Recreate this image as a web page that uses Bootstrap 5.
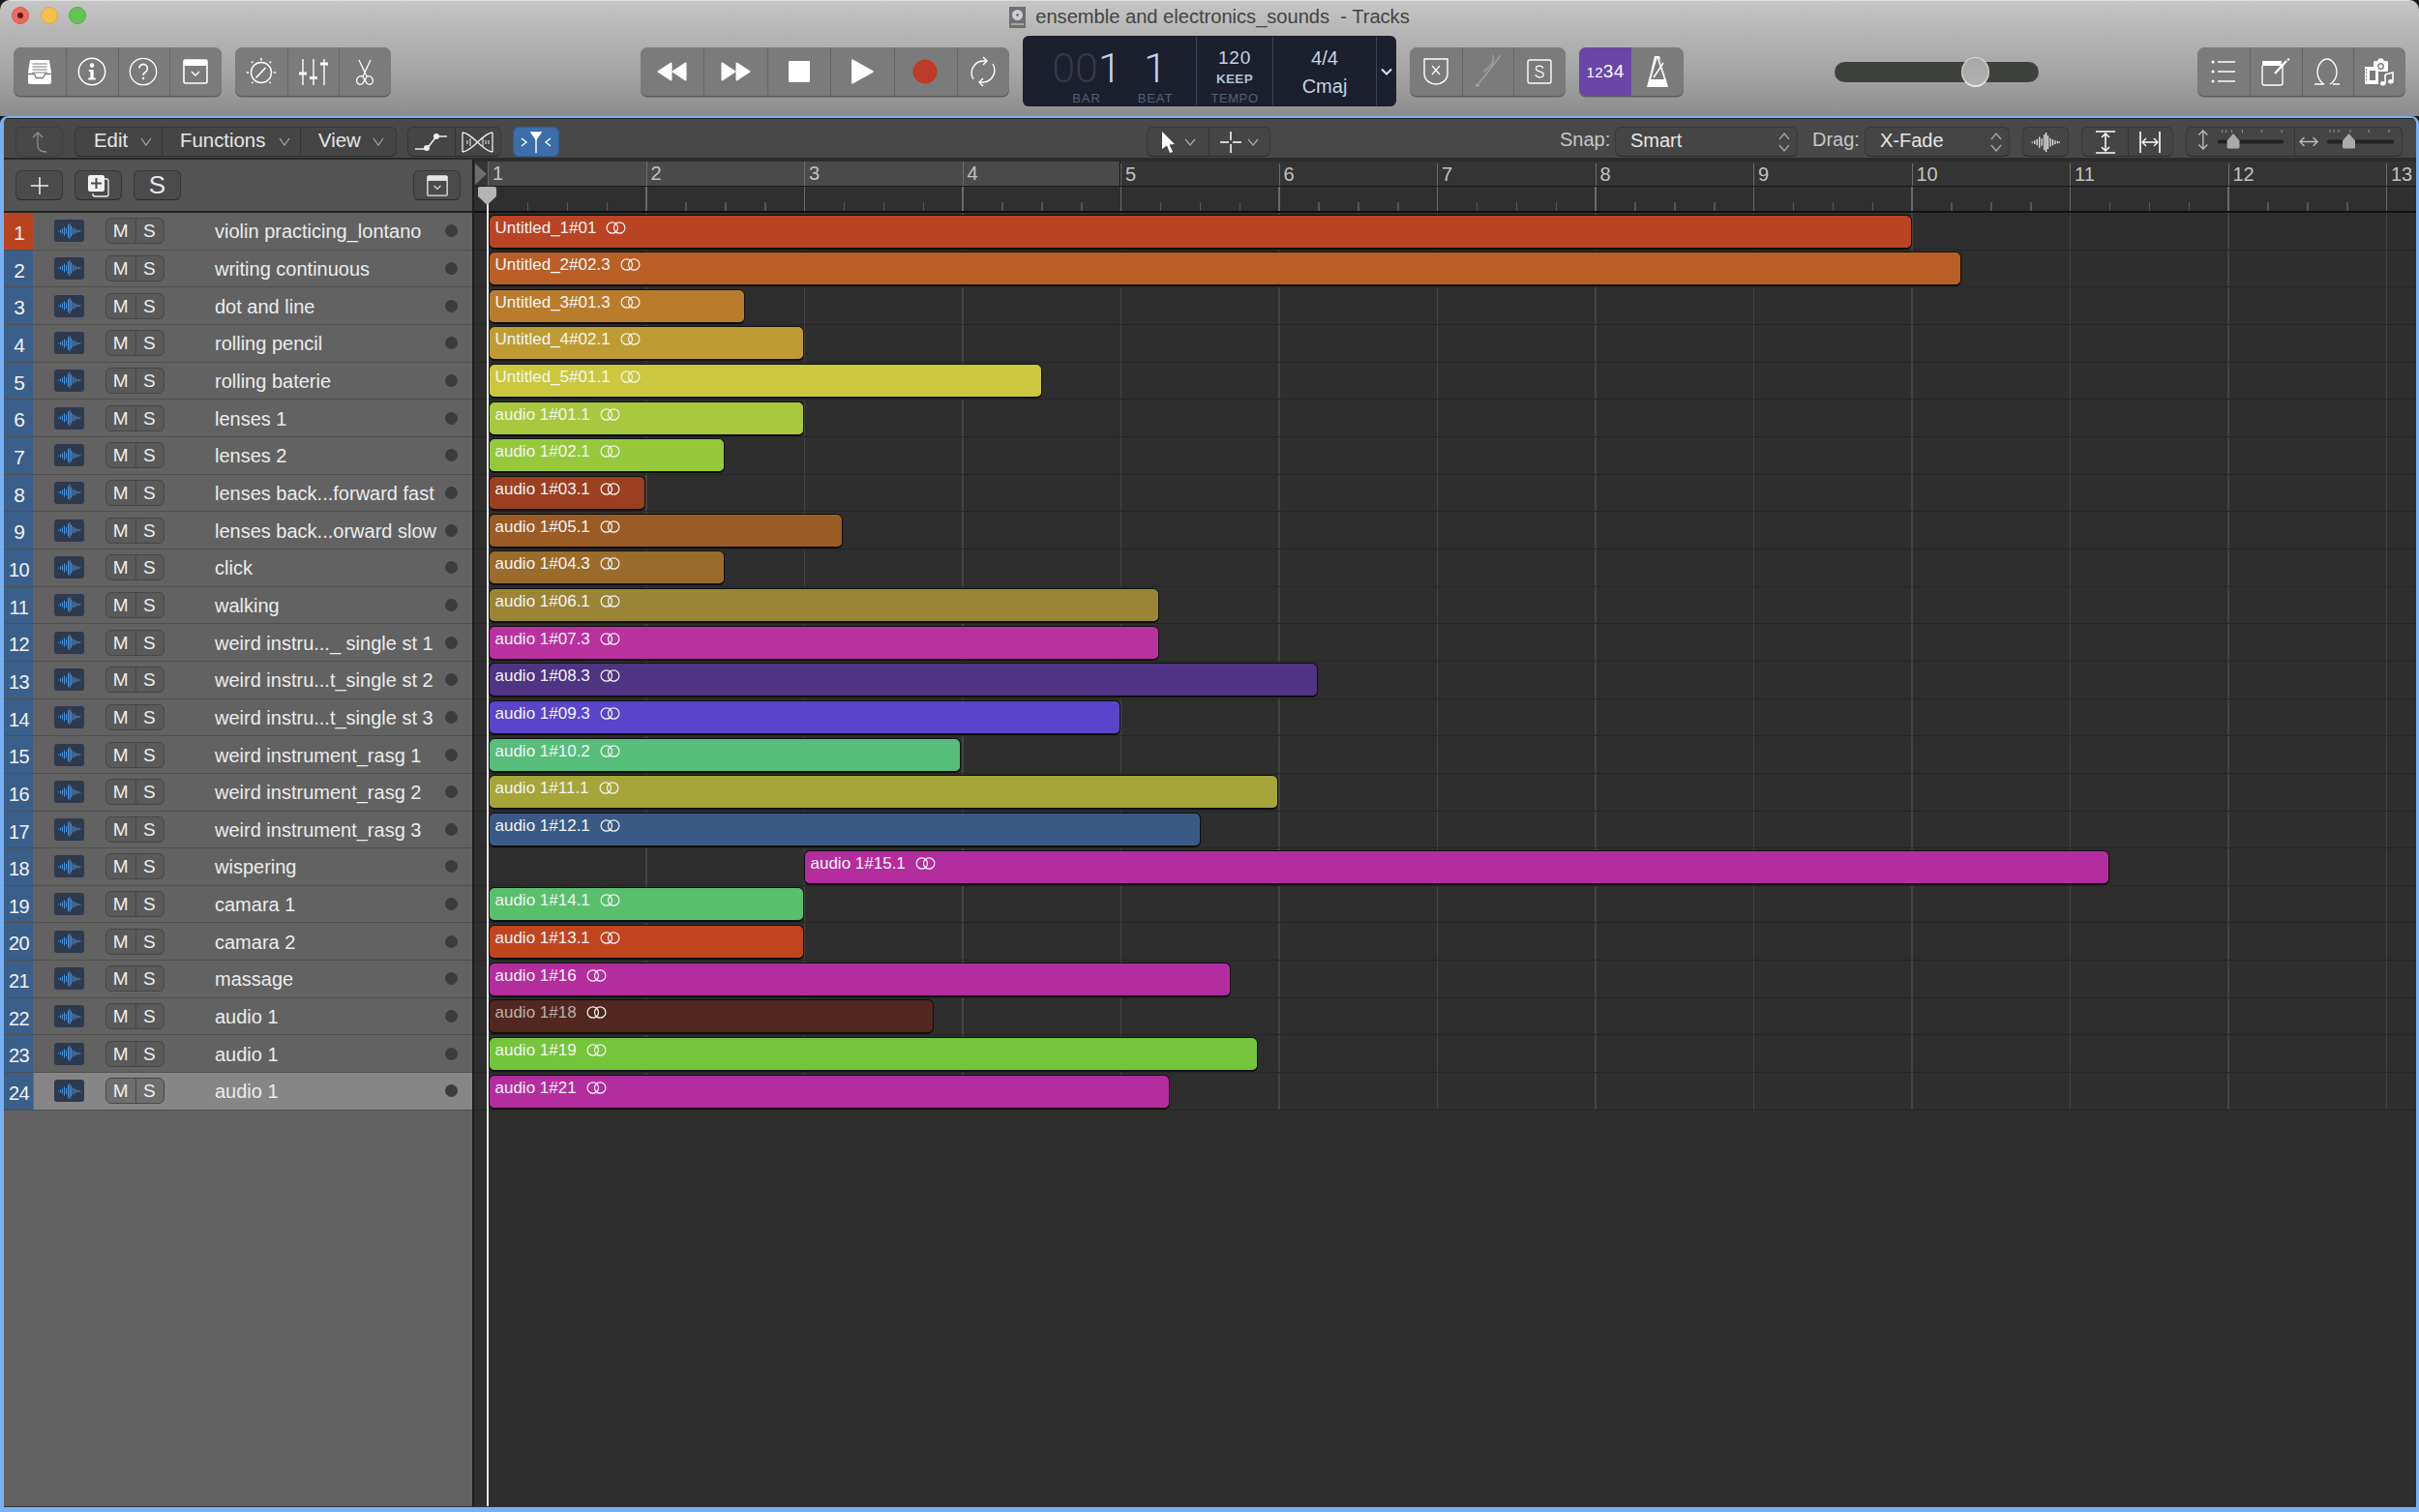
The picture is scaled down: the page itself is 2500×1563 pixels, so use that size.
<!DOCTYPE html>
<html lang="en">
<head>
<meta charset="utf-8">
<title>ensemble and electronics_sounds - Tracks</title>
<link href="https://cdn.jsdelivr.net/npm/bootstrap@5.3.0/dist/css/bootstrap.min.css" rel="stylesheet">
<style>
html,body{margin:0;height:1563px;width:2500px;overflow:hidden;background:#1b1b1b}
body{font-family:"Liberation Sans",Arial,sans-serif;font-size:20px;color:#e8e8e8}
svg{display:block}
.daw{width:2500px;height:1563px;border-radius:10px 10px 0 0;overflow:hidden}
.topbar{height:120px;background:linear-gradient(#c6c6c6 0,#b6b6b6 25%,#a6a6a6 60%,#8c8c8c 100%);border-top:1px solid #dedede}
.titlerow{height:36px;color:#444;white-space:pre;padding-bottom:3px;font-size:20.1px}
.lamps{left:12px;top:6px}
.lamp{width:18px;height:18px;border-radius:50%;margin-right:11.5px}
.lamp.r{background:#ec6a5e;border:1px solid #d8574c;position:relative}
.lamp.r::after{content:"";position:absolute;left:5px;top:5px;width:6px;height:6px;border-radius:50%;background:#5c1a14}
.lamp.y{background:#f4bf4f;border:1px solid #deaa3f}
.lamp.g{background:#61c554;border:1px solid #50ad45}
.docglyph{width:17px;height:22px;margin-right:10px;margin-top:0}
.toolrow{height:73px;padding-left:14px}
.tgrp{height:50px;margin-top:12px;background:#7b7b7b;border-radius:7px;box-shadow:0 1.5px 0 #5f5f5f}
.tgrp>.btn{background:transparent;border:0;border-radius:0;padding:0;color:#fff;display:flex;align-items:center;justify-content:center;border-right:1px solid #666;flex:1 1 0;margin:0}
.tgrp>.btn:last-child{border-right:0}
.tgrp>.btn.narrow{flex:0 0 54px}
.w215{width:215px}.w161{width:161px}.w381{width:381px}.w108{width:108px}
.m14{margin-left:14px}.m258{margin-left:258px}.m156{margin-left:156px}.m164{margin-left:164px}
.tgrp>.btn.counter{background:#6b46a8;flex:0 0 54px;border-radius:7px 0 0 7px;border:0;font-size:19px;letter-spacing:.3px}
.counter small{font-size:15px}
.lcd{width:386px;height:73px;margin-left:14px;background:#1b1f2e;border-radius:6px;color:#c6d3e4;font-family:"Liberation Sans",sans-serif}
.lcell{border-right:1.5px solid #3b4559;height:71px;margin-top:1px}
.lpos{width:180px;padding-left:29px}
.ltempo{width:79px}
.lsig{width:107px}
.lnum{font-family:Roboto,"Liberation Sans",sans-serif;font-weight:300;font-size:43px;line-height:43px;color:#c6d3e4;margin-top:10.5px;white-space:nowrap}
.lnum i{font-style:normal;color:#33394a}
.llab{font-size:13px;line-height:13px;color:#55607a;letter-spacing:.9px;margin-top:3.5px}
.lbar{width:74px}.lbeat{width:68px}
.lt1{font-size:19px;line-height:19px;margin-top:11.5px;letter-spacing:.7px}
.lt2{font-size:13.5px;line-height:14px;margin-top:6.5px;font-weight:700;color:#b4c0d2;letter-spacing:.3px}
.lt3{font-size:13px;line-height:13px;margin-top:6px;color:#55607a;letter-spacing:.6px}
.ls1{font-size:20px;line-height:20px;margin-top:11.5px}
.ls2{font-size:20px;line-height:20px;margin-top:9px}
.volwrap{width:211px;height:50px;margin-top:12px}
.voltrack{width:211px;height:21px;border-radius:11px;background:#3f413d}
.volthumb{left:131px;top:-5px;width:29px;height:31px;border-radius:50%;background:linear-gradient(#a8a8a8,#b0b0b0);border:1px solid #dcdcdc;border-bottom:2px solid #e6e6e6}
.frame{height:1442px;border:solid #7ab0f1;border-width:2px 3px 5px 4px;border-radius:8px 8px 0 0;background:#333;overflow:hidden}
.bar2{height:43px;background:#484848;border-top:1px solid #222;border-bottom:2px solid #2a2a2a;position:relative}
.dbtn{height:31px;background:#454545;border:1px solid #383838;border-bottom-color:#2c2c2c;border-radius:6px;color:#e6e6e6;font-size:20px;padding:0;display:flex;align-items:center;justify-content:center}
.dbtn:disabled,.dbtn.off{opacity:1;background:#484848;color:#8c8c8c;border-color:#3e3e3e}
.dgrp{height:31px;background:#454545;border:1px solid #383838;border-bottom-color:#2c2c2c;border-radius:6px}
.dgrp>.btn{background:transparent;border:0;border-right:1px solid #333;border-radius:0;color:#e6e6e6;padding:0;font-size:20.4px;margin:0;display:flex;align-items:center;justify-content:center;flex:none;height:29px}
.dgrp>.btn:last-child{border-right:0}
.dgrp>.btn.mnu{justify-content:space-between;padding:0 10px 0 19px}
.mnu span{padding-bottom:3px}
.sel span{padding-bottom:3px}
.ml12{margin-left:12px}
.pos-a{position:absolute;top:8px}
.ttxt{color:#c6c6c6}
.sel{justify-content:space-between!important;padding:0 7px 0 15px!important}
.snap{width:189px}.drag{width:150px}
.lower{height:1392px}
.leftp{width:484px;background:#626262;border-right:2px solid #1e1e1e;box-sizing:content-box}
.lhead{height:55px;background:#535353;border-bottom:2px solid #222;padding:11px 12px 0 12px}
.lhead .dbtn{width:49px;background:#4b4b4b}
.trow{height:38.67px;background:#626262;border-bottom:1.5px solid #505050;box-sizing:border-box}
.trow.sel24{background:#868686}
.tnum{width:30px;height:100%;background:#3a5f8a;color:#f2f2f2;font-size:21px;flex:none;text-align:center;padding:8px 0 0 2px;line-height:26px;box-shadow:1px 0 0 #506c8a}
.tnum.hot{background:#b9431f}
.tnum.nn{font-size:20px;letter-spacing:-.5px;padding-left:1px}
.ticon{margin-left:22px;width:31px;height:23px;background:#2d3a4e;border-radius:3px;flex:none;color:#4c92dc;display:flex;align-items:center;justify-content:center}
.msg{margin-left:22px;width:61px;height:27px;background:#5a5a5a;border:1px solid #474747;border-radius:6px;flex:none}
.msg>.btn{flex:1 1 0;padding:0;background:transparent;border:0;border-right:1.5px solid #474747;border-radius:0;color:#eee;font-size:19px;line-height:25px;margin:0}
.msg>.btn:last-child{border-right:0}
.trow.sel24 .msg{background:#6e6e6e}
.tname{margin-left:52px;color:#ececec;font-size:20px;white-space:nowrap;line-height:36px;padding-top:1px}
.tdot{width:13px;height:13px;background:#3c3c3c;border-radius:50%;margin-right:15px;flex:none}
.timeline{width:2006px;position:relative;background:#2e2e2e}
.rule1{height:25px;background:#343434;padding-left:14px;border-top:2px solid #2c2c2c;border-bottom:1px solid #1b1b1b;box-sizing:content-box}
.bcell{width:163.5px;flex:none;border-left:1.5px solid #6d6d6d;padding-left:4px;color:#c2c2c2;font-size:20px;line-height:22px;height:23px;margin-top:2px;overflow:visible}
.bfill{background:#4a4a4a;height:25px;margin-top:0;padding-top:2px;line-height:20px;border-left-color:#6d6d6d}
.bfirst{border-left:1px dotted #888;}
.cycend{border-right:1px solid #111}
.rule2{height:27px;border-bottom:2px solid #111;background-color:#2f2f2f;background-image:repeating-linear-gradient(90deg,#6a6a6a 0 1.5px,transparent 1.5px 163.5px),repeating-linear-gradient(90deg,#555 0 1.5px,transparent 1.5px 40.875px);background-size:100% 100%,100% 9px;background-position:14px 0,14px bottom;background-repeat:no-repeat;box-sizing:border-box}
.lanes{height:928.1px;padding-left:15px;background-image:repeating-linear-gradient(90deg,#444 0 1.5px,transparent 1.5px 163.5px);background-position:14px 0;background-repeat:no-repeat}
.lane{height:38.67px;border-bottom:1px solid #262626;padding-top:1.5px;box-sizing:border-box;margin-left:-15px;padding-left:15px;display:flex}
.rgn{height:36px;border:1px solid #0f0f0f;border-bottom-width:2px;border-radius:6px;color:#f4f4f4;font-size:17px;line-height:17px;padding:4px 0 0 5.5px;display:flex;align-items:flex-start;white-space:nowrap;flex:none}
.rgn svg{margin-left:10px;margin-top:2px}
.rgn.dim{color:#bdb0a8}
.c1{background:#b94323}.c2{background:#b95f26}.c3{background:#b97c2c}.c4{background:#bf9c33}.c5{background:#cbc83f}.c6{background:#a9c73f}.c7{background:#96c83c}.c8{background:#9a3f20}.c9{background:#9a5b25}.c10{background:#9a6b2a}.c11{background:#9a8537}.c12{background:#b9309f}.c13{background:#4e3482}.c14{background:#5a44c9}.c15{background:#57bd7b}.c16{background:#a5a53a}.c17{background:#3a5a85}.c18{background:#b42d9e}.c19{background:#58c06c}.c20{background:#c0451f}.c22{background:#52271f}.c23{background:#74c53c}
.phead{position:absolute;left:4px;top:28px}
.pline{position:absolute;left:13.2px;top:28px;bottom:0;width:2px;background:#e4e4e4}
.marker{position:absolute;left:0;top:4px}
</style>
</head>
<body>
<svg width="0" height="0" class="position-absolute">
<defs>
<symbol id="wv" viewBox="0 0 24 16"><path d="M1 7.500v1M3 6.500v3M5 5.500v5M7 3.500v9M9 5v6M11 1.500v13M12.500 0v16M14 2.500v11M16 4.500v7M18 5.500v5M20 6.500v3M22 7v2M23.500 7.500v1" stroke="currentColor" stroke-width="1" fill="none"/></symbol>
<symbol id="rings" viewBox="0 0 21 13"><g fill="none" stroke="#f4f4f4" stroke-width="1.200"><circle cx="6.800" cy="6.500" r="5.700"/><circle cx="14.200" cy="6.500" r="5.700"/></g></symbol>
<symbol id="winv" viewBox="0 0 26 26"><rect x="1" y="1" width="24" height="24" rx="1.500" fill="none" stroke="currentColor" stroke-width="1.600"/><rect x="1" y="1" width="24" height="6" fill="currentColor"/><path d="M9 13l4 4 4-4" fill="none" stroke="currentColor" stroke-width="1.300"/></symbol>
</defs>
</svg>
<div class="daw d-flex flex-column">
 <div class="topbar flex-none">
  <div class="titlerow d-flex align-items-center justify-content-center position-relative">
   <div class="lamps d-flex position-absolute"><span class="lamp r"></span><span class="lamp y"></span><span class="lamp g"></span></div>
   <svg class="docglyph" viewBox="0 0 17 22"><rect width="17" height="22" fill="#6f6f6f"/><circle cx="8.500" cy="8.500" r="5.500" fill="#c8ced6"/><circle cx="8.500" cy="8.500" r="1.200" fill="#555"/><rect x="2" y="17" width="13" height="2" fill="#a5a5a5"/></svg>
   <span>ensemble and electronics_sounds  - Tracks</span>
  </div>
  <div class="toolrow d-flex align-items-start">
   <div class="btn-group tgrp w215">
    <button class="btn" aria-label="Library"><svg width="28" height="27" viewBox="0 0 28 27"><path d="M4 1h20l2 13v10a2 2 0 0 1-2 2H4a2 2 0 0 1-2-2V14z" fill="#fff"/><path d="M6.500 5h15M6.500 8h15M6.500 11h15M6 14h16" stroke="#7b7b7b" stroke-width="1.100"/><path d="M2 15.500h6.500l2 4h7l2-4H26" fill="none" stroke="#7b7b7b" stroke-width="1.300"/></svg></button>
    <button class="btn" aria-label="Info"><svg width="30" height="30" viewBox="0 0 30 30"><circle cx="15" cy="15" r="13.700" fill="none" stroke="#fff" stroke-width="1.500"/><circle cx="15" cy="8.600" r="2.300" fill="#fff"/><path d="M11.800 13h4.900v8.600h2v1.900h-7.400v-1.900h2.100v-6.700h-1.600z" fill="#fff"/></svg></button>
    <button class="btn" aria-label="Help"><svg width="30" height="30" viewBox="0 0 30 30"><circle cx="15" cy="15" r="13.700" fill="none" stroke="#fff" stroke-width="1.300"/><path d="M10.800 11.600a4.300 4.300 0 1 1 6.800 3.600c-1.600 1.100-2.500 1.700-2.500 3.600" fill="none" stroke="#fff" stroke-width="1.600"/><circle cx="15.100" cy="22" r="1.200" fill="#fff"/></svg></button>
    <button class="btn" aria-label="Smart Controls"><svg width="26" height="26"><use href="#winv"/></svg></button>
   </div>
   <div class="btn-group tgrp w161 m14">
    <button class="btn" aria-label="Tempo"><svg width="32" height="30" viewBox="0 0 32 30" fill="none" stroke="#fff"><circle cx="16" cy="16" r="10.500" stroke-width="1.400"/><path d="M10.500 21.500L20.500 11" stroke-width="1.600"/><path d="M16 1v2.400M6 4.600l1.300 1.300M26 4.600l-1.300 1.300M.8 16h2.400M28.800 16h2.400M6.300 27l1.200-1.200M25.700 27l-1.200-1.200" stroke-width="1.600"/></svg></button>
    <button class="btn" aria-label="Mixer"><svg width="32" height="28" viewBox="0 0 32 28" fill="none" stroke="#fff" stroke-width="1.400"><path d="M5 1v27M16 1v27M27 1v27"/><path d="M1 16h8M12 20.500h8M23 6h8" stroke-width="3"/></svg></button>
    <button class="btn" aria-label="Scissors"><svg width="20" height="27" viewBox="0 0 20 27" fill="none" stroke="#fff" stroke-width="1.300"><path d="M4 1l8 17M16 1L8 18"/><ellipse cx="5.500" cy="22" rx="3.800" ry="4.300" transform="rotate(20 5.500 22)"/><ellipse cx="14.500" cy="22" rx="3.800" ry="4.300" transform="rotate(-20 14.500 22)"/></svg></button>
   </div>
   <div class="btn-group tgrp w381 m258">
    <button class="btn" aria-label="Rewind"><svg width="32" height="20" viewBox="0 0 32 20" fill="#fff"><path d="M15.500 1.600v16.800a1 1 0 0 1-1.600.8L1 10.800a1 1 0 0 1 0-1.600L13.900.8a1 1 0 0 1 1.600.8z"/><path d="M30.500 1.600v16.800a1 1 0 0 1-1.600.8L16 10.800a1 1 0 0 1 0-1.600L28.900.8a1 1 0 0 1 1.600.8z"/></svg></button>
    <button class="btn" aria-label="Forward"><svg width="32" height="20" viewBox="0 0 32 20" fill="#fff"><path d="M1.500 1.600v16.800a1 1 0 0 0 1.600.8L16 10.800a1 1 0 0 0 0-1.600L3.100.8a1 1 0 0 0-1.600.8z"/><path d="M16.500 1.600v16.800a1 1 0 0 0 1.600.8L31 10.800a1 1 0 0 0 0-1.600L18.100.8a1 1 0 0 0-1.600.8z"/></svg></button>
    <button class="btn" aria-label="Stop"><svg width="22" height="22"><rect width="22" height="22" rx="1" fill="#fff"/></svg></button>
    <button class="btn" aria-label="Play"><svg width="24" height="26" viewBox="0 0 24 26"><path d="M1 1.500v23a1 1 0 0 0 1.500.9L23 13.900a1 1 0 0 0 0-1.800L2.500.6A1 1 0 0 0 1 1.500z" fill="#fff"/></svg></button>
    <button class="btn" aria-label="Record"><svg width="26" height="26"><circle cx="13" cy="13" r="12.500" fill="#be3a2b"/></svg></button>
    <button class="btn narrow" aria-label="Cycle"><svg width="32" height="32" viewBox="0 0 32 32" fill="none" stroke="#fff" stroke-width="1.400"><path d="M6 24A12.500 12.500 0 0 1 16 5h3"/><path d="M16 1l4 4-4 4"/><path d="M26 8a12.500 12.500 0 0 1-10 19h-3"/><path d="M16 31l-4-4 4-4"/></svg></button>
   </div>
   <div class="lcd d-flex">
    <div class="lcell lpos d-flex">
     <div class="lbar d-flex flex-column align-items-center"><div class="lnum"><i>00</i>1</div><div class="llab">BAR</div></div>
     <div class="lbeat d-flex flex-column align-items-center"><div class="lnum">1</div><div class="llab">BEAT</div></div>
    </div>
    <div class="lcell ltempo text-center"><div class="lt1">120</div><div class="lt2">KEEP</div><div class="lt3">TEMPO</div></div>
    <div class="lcell lsig text-center"><div class="ls1">4/4</div><div class="ls2">Cmaj</div></div>
    <div class="d-flex flex-grow-1 align-items-center justify-content-center"><svg width="12" height="8" viewBox="0 0 12 8"><path d="M1 1.500l5 5 5-5" fill="none" stroke="#d9e2ee" stroke-width="2"/></svg></div>
   </div>
   <div class="btn-group tgrp w161 m14">
    <button class="btn" aria-label="Low latency"><svg width="26" height="28" viewBox="0 0 26 28" fill="none" stroke="#fff" stroke-width="1.400"><path d="M1 1h24v15c0 7-6 11-12 11S1 23 1 16z"/><path d="M9 8l8 9M17 8l-8 9" stroke-width="1.200"/></svg></button>
    <button class="btn" aria-label="Tuner"><svg width="30" height="36" viewBox="0 0 30 36" fill="none" stroke="#9f9f9f" stroke-width="1.500"><path d="M28 1L12 22M20 1c2 6-2 12-10 17"/><circle cx="4" cy="32" r="2" fill="#9f9f9f" stroke="none"/><path d="M5 30l7-8"/></svg></button>
    <button class="btn" aria-label="Solo"><svg width="26" height="26" viewBox="0 0 26 26" fill="none" stroke="#fff" stroke-width="1.400"><rect x="1" y="1" width="24" height="24" rx="2"/><path d="M16.800 9.500c-.4-1.500-2-2.300-3.800-2.300-2 0-3.600 1-3.600 2.700 0 3.800 7.800 2.200 7.800 6 0 1.800-1.800 2.900-4 2.900-2.100 0-3.800-1-4.200-2.700" stroke-width="1.200"/></svg></button>
   </div>
   <div class="btn-group tgrp w108 m14">
    <button class="btn counter"><span><small>12</small>34</span></button>
    <button class="btn" aria-label="Metronome"><svg width="24" height="34" viewBox="0 0 24 34"><path d="M9 1h5l9 32H1z" fill="#fff"/><path d="M11 2L5 19l-1.500 6h17L15 5z" fill="#7b7b7b"/><path d="M5 25h14l2 8H3z" fill="#fff"/><path d="M8 23l10-15" stroke="#fff" stroke-width="1.500"/><path d="M11 2L4 26M12 2l8 24" stroke="#fff" stroke-width="1.500" fill="none"/></svg></button>
   </div>
   <div class="volwrap m156 d-flex align-items-center">
    <div class="voltrack position-relative"><div class="volthumb position-absolute"></div></div>
   </div>
   <div class="btn-group tgrp w215 m164">
    <button class="btn" aria-label="List editors"><svg width="26" height="30" viewBox="0 0 26 30" fill="none" stroke="#fff" stroke-width="1.400"><path d="M7 5h18M7 15h18M7 25h18"/><circle cx="2" cy="5" r="1.500" fill="#fff" stroke="none"/><circle cx="2" cy="15" r="1.500" fill="#fff" stroke="none"/><circle cx="2" cy="25" r="1.500" fill="#fff" stroke="none"/></svg></button>
    <button class="btn" aria-label="Note pad"><svg width="30" height="29" viewBox="0 0 30 29" fill="none" stroke="#fff" stroke-width="1.400"><path d="M22 8v18a2 2 0 0 1-2 2H3a2 2 0 0 1-2-2V8"/><path d="M1 2h20v5H1z" fill="#fff" stroke="none" transform="translate(0 1)"/><path d="M14 16L26 3" stroke-width="2.400"/><circle cx="28" cy="1.500" r="1.300" fill="#fff" stroke="none"/></svg></button>
    <button class="btn" aria-label="Loop browser"><svg width="28" height="28" viewBox="0 0 28 28" fill="none" stroke="#fff" stroke-width="1.300"><path d="M1 27h10c-4-2-7-7-7-12C4 7 9 1 14 1s10 6 10 14c0 5-3 10-7 12"/><path d="M20 27h7"/></svg></button>
    <button class="btn" aria-label="Browser"><svg width="32" height="30" viewBox="0 0 32 30"><rect x="10" y="4" width="15" height="11" rx="1.500" fill="#fff"/><path d="M14 4l1.500-2.500h4L21 4" fill="#fff"/><circle cx="17.500" cy="9.500" r="3.400" fill="#7b7b7b"/><circle cx="17.500" cy="9.500" r="2" fill="#fff"/><path d="M1 10h14v18H1z" fill="#fff"/><path d="M6 14h6v10H6z" fill="#7b7b7b"/><path d="M2.500 12v14" stroke="#7b7b7b" stroke-width="1" stroke-dasharray="2 1.500"/><path d="M22 18l8-2v9" fill="none" stroke="#fff" stroke-width="1.600"/><path d="M22 18v9" stroke="#fff" stroke-width="1.600"/><ellipse cx="19.800" cy="27.300" rx="2.800" ry="2.200" fill="#fff"/><ellipse cx="28" cy="25.300" rx="2.800" ry="2.200" fill="#fff"/></svg></button>
   </div>
  </div>
 </div>
 <div class="frame flex-grow-1">
  <div class="bar2 d-flex">
   <button class="btn dbtn off pos-a" style="left:12px;width:49px" aria-label="Up"><svg width="18" height="24" viewBox="0 0 18 24" fill="none" stroke="#8f8f8f" stroke-width="1.300"><path d="M2 7l5-5 5 5M7 2v13c0 4 3 7 9 7"/></svg></button>
   <div class="btn-group dgrp pos-a" style="left:73px;width:333px">
    <button class="btn mnu" style="width:90px"><span>Edit</span><svg width="12" height="9" viewBox="0 0 12 9"><path d="M1 1l5 7 5-7" fill="none" stroke="#aaa" stroke-width="1.200"/></svg></button>
    <button class="btn mnu" style="width:144px"><span>Functions</span><svg width="12" height="9" viewBox="0 0 12 9"><path d="M1 1l5 7 5-7" fill="none" stroke="#aaa" stroke-width="1.200"/></svg></button>
    <button class="btn mnu" style="width:97px"><span>View</span><svg width="12" height="9" viewBox="0 0 12 9"><path d="M1 1l5 7 5-7" fill="none" stroke="#aaa" stroke-width="1.200"/></svg></button>
   </div>
   <div class="btn-group dgrp pos-a" style="left:417px;width:97px">
    <button class="btn" style="width:49px" aria-label="Automation"><svg width="34" height="20" viewBox="0 0 34 20" fill="none" stroke="#eee" stroke-width="1.600"><path d="M0 17h12M12 17L22 4M22 4h11"/><circle cx="12" cy="16" r="3" fill="#eee" stroke="none"/><circle cx="22" cy="4" r="3" fill="#eee" stroke="none"/></svg></button>
    <button class="btn" style="width:47px" aria-label="Flex"><svg width="33" height="22" viewBox="0 0 33 22" fill="none" stroke="#eee" stroke-width="1.300"><path d="M1 1c10 0 21 20 31 20M1 21C11 21 22 1 32 1M1 1v20M32 1v20"/><path d="M6 9v4M9 7v8M25 9v4M22 7v8M28 9v4" stroke-width="1"/></svg></button>
   </div>
   <button class="btn dbtn pos-a" style="left:526px;width:48px;background:#3c6eaa;border-color:#2f5a90" aria-label="Catch"><svg width="32" height="22" viewBox="0 0 32 22" fill="none" stroke="#fff" stroke-width="1.400"><path d="M1 7l5 4-5 4M31 7l-5 4 5 4"/><path d="M11 1h10l-5 7z" fill="#fff"/><path d="M16 7v15"/></svg></button>
   <div class="btn-group dgrp pos-a" style="left:1181px;width:128px">
    <button class="btn" style="width:64px" aria-label="Pointer"><svg width="38" height="24" viewBox="0 0 38 24"><path d="M2 1l13 13-5.500.5L13 22l-3 1-3-7.500L2 19z" fill="#fff"/><path d="M26 9l5 6 5-6" fill="none" stroke="#aaa" stroke-width="1.200"/></svg></button>
    <button class="btn" style="width:63px" aria-label="Marquee"><svg width="42" height="24" viewBox="0 0 42 24"><path d="M12 1v9M12 14v9M1 12h9M14 12h9" stroke="#fff" stroke-width="1.500"/><path d="M30 9l5 6 5-6" fill="none" stroke="#aaa" stroke-width="1.200"/></svg></button>
   </div>
   <span class="ttxt position-absolute" style="left:1608px;top:6px;line-height:30px">Snap:</span>
   <button class="btn dbtn sel snap pos-a" style="left:1665px"><span>Smart</span><svg width="12" height="28" viewBox="0 0 12 28" fill="none" stroke="#aaa" stroke-width="1.200"><path d="M1 11l5-6 5 6M1 17l5 6 5-6"/></svg></button>
   <span class="ttxt position-absolute" style="left:1869px;top:6px;line-height:30px">Drag:</span>
   <button class="btn dbtn sel drag pos-a" style="left:1923px"><span>X-Fade</span><svg width="12" height="28" viewBox="0 0 12 28" fill="none" stroke="#aaa" stroke-width="1.200"><path d="M1 11l5-6 5 6M1 17l5 6 5-6"/></svg></button>
   <button class="btn dbtn pos-a" style="left:2086px;width:48px;color:#eee" aria-label="Waveform"><svg width="32" height="20"><use href="#wv"/></svg></button>
   <div class="btn-group dgrp pos-a" style="left:2147px;width:95px">
    <button class="btn" style="width:48px" aria-label="Fit height"><svg width="22" height="24" viewBox="0 0 22 24" fill="none" stroke="#fff"><path d="M1 1h20M1 23h20" stroke-width="1.600"/><path d="M11 3v18M7 7l4-4 4 4M7 17l4 4 4-4" stroke-width="1.500"/></svg></button>
    <button class="btn" style="width:46px" aria-label="Fit width"><svg width="22" height="24" viewBox="0 0 22 24" fill="none" stroke="#fff"><path d="M1 1v22M21 1v22" stroke-width="1.600"/><path d="M3 12h16M7 8l-4 4 4 4M15 8l4 4-4 4" stroke-width="1.300"/></svg></button>
   </div>
   <div class="btn-group dgrp pos-a" style="left:2255px;width:224px">
    <button class="btn" style="width:112px" aria-label="Vertical zoom"><svg width="112" height="29" viewBox="0 0 112 29"><path d="M17 3v19M12.500 7.500L17 3l4.500 4.500M12.500 17.500L17 22l4.500-4.500" fill="none" stroke="#bbb" stroke-width="1.400"/><path d="M34 14.500h65" stroke="#222" stroke-width="4" stroke-linecap="round"/><path d="M37 2v3M41 2v3M47 2v3M58 2v3M78 2v3M99 2v3" stroke="#999" stroke-width="1"/><path d="M48.500 6l6.500 7.500V20a1.500 1.500 0 0 1-1.500 1.500h-10A1.500 1.500 0 0 1 42 20v-6.500z" fill="#aaa"/></svg></button>
    <button class="btn" style="width:111px" aria-label="Horizontal zoom"><svg width="111" height="29" viewBox="0 0 111 29"><path d="M6 14.500h18M10.500 10L6 14.500l4.500 4.500M19.500 10l4.500 4.500-4.500 4.500" fill="none" stroke="#bbb" stroke-width="1.400"/><path d="M36 14.500h65" stroke="#222" stroke-width="4" stroke-linecap="round"/><path d="M37 2v3M41 2v3M46 2v3M58 2v3M77 2v3M98 2v3" stroke="#999" stroke-width="1"/><path d="M56.500 6l6.500 7.500V20a1.500 1.500 0 0 1-1.500 1.500h-10a1.500 1.500 0 0 1-1.500-1.500v-6.500z" fill="#aaa"/></svg></button>
   </div>
  </div>
  <div class="lower d-flex">
   <div class="leftp">
    <div class="lhead d-flex">
     <button class="btn dbtn" aria-label="Add track"><svg width="20" height="20" viewBox="0 0 20 20"><path d="M10 1v18M1 10h18" stroke="#eee" stroke-width="1.500"/></svg></button>
     <button class="btn dbtn ml12" aria-label="Duplicate track"><svg width="26" height="26" viewBox="0 0 26 26"><path d="M19 6h2a2 2 0 0 1 2 2v14a2 2 0 0 1-2 2H9a2 2 0 0 1-2-2v-1" fill="none" stroke="#eee" stroke-width="1.300"/><rect x="2" y="2" width="17" height="17" rx="2" fill="#f2f2f2"/><path d="M10.500 5v11M5 10.500h11" stroke="#4b4b4b" stroke-width="2"/></svg></button>
     <button class="btn dbtn ml12" style="font-size:26px">S</button>
     <button class="btn dbtn ms-auto" aria-label="Options"><svg width="22" height="22"><use href="#winv"/></svg></button>
    </div>
    <div class="trow d-flex align-items-center"><div class="tnum hot">1</div><div class="ticon"><svg width="25" height="16"><use href="#wv"/></svg></div><div class="btn-group msg"><button class="btn">M</button><button class="btn">S</button></div><div class="tname flex-grow-1">violin practicing_lontano</div><span class="tdot"></span></div>
    <div class="trow d-flex align-items-center"><div class="tnum">2</div><div class="ticon"><svg width="25" height="16"><use href="#wv"/></svg></div><div class="btn-group msg"><button class="btn">M</button><button class="btn">S</button></div><div class="tname flex-grow-1">writing continuous</div><span class="tdot"></span></div>
    <div class="trow d-flex align-items-center"><div class="tnum">3</div><div class="ticon"><svg width="25" height="16"><use href="#wv"/></svg></div><div class="btn-group msg"><button class="btn">M</button><button class="btn">S</button></div><div class="tname flex-grow-1">dot and line</div><span class="tdot"></span></div>
    <div class="trow d-flex align-items-center"><div class="tnum">4</div><div class="ticon"><svg width="25" height="16"><use href="#wv"/></svg></div><div class="btn-group msg"><button class="btn">M</button><button class="btn">S</button></div><div class="tname flex-grow-1">rolling pencil</div><span class="tdot"></span></div>
    <div class="trow d-flex align-items-center"><div class="tnum">5</div><div class="ticon"><svg width="25" height="16"><use href="#wv"/></svg></div><div class="btn-group msg"><button class="btn">M</button><button class="btn">S</button></div><div class="tname flex-grow-1">rolling baterie</div><span class="tdot"></span></div>
    <div class="trow d-flex align-items-center"><div class="tnum">6</div><div class="ticon"><svg width="25" height="16"><use href="#wv"/></svg></div><div class="btn-group msg"><button class="btn">M</button><button class="btn">S</button></div><div class="tname flex-grow-1">lenses 1</div><span class="tdot"></span></div>
    <div class="trow d-flex align-items-center"><div class="tnum">7</div><div class="ticon"><svg width="25" height="16"><use href="#wv"/></svg></div><div class="btn-group msg"><button class="btn">M</button><button class="btn">S</button></div><div class="tname flex-grow-1">lenses 2</div><span class="tdot"></span></div>
    <div class="trow d-flex align-items-center"><div class="tnum">8</div><div class="ticon"><svg width="25" height="16"><use href="#wv"/></svg></div><div class="btn-group msg"><button class="btn">M</button><button class="btn">S</button></div><div class="tname flex-grow-1">lenses back...forward fast</div><span class="tdot"></span></div>
    <div class="trow d-flex align-items-center"><div class="tnum">9</div><div class="ticon"><svg width="25" height="16"><use href="#wv"/></svg></div><div class="btn-group msg"><button class="btn">M</button><button class="btn">S</button></div><div class="tname flex-grow-1">lenses back...orward slow</div><span class="tdot"></span></div>
    <div class="trow d-flex align-items-center"><div class="tnum nn">10</div><div class="ticon"><svg width="25" height="16"><use href="#wv"/></svg></div><div class="btn-group msg"><button class="btn">M</button><button class="btn">S</button></div><div class="tname flex-grow-1">click</div><span class="tdot"></span></div>
    <div class="trow d-flex align-items-center"><div class="tnum nn">11</div><div class="ticon"><svg width="25" height="16"><use href="#wv"/></svg></div><div class="btn-group msg"><button class="btn">M</button><button class="btn">S</button></div><div class="tname flex-grow-1">walking</div><span class="tdot"></span></div>
    <div class="trow d-flex align-items-center"><div class="tnum nn">12</div><div class="ticon"><svg width="25" height="16"><use href="#wv"/></svg></div><div class="btn-group msg"><button class="btn">M</button><button class="btn">S</button></div><div class="tname flex-grow-1">weird instru..._ single st 1</div><span class="tdot"></span></div>
    <div class="trow d-flex align-items-center"><div class="tnum nn">13</div><div class="ticon"><svg width="25" height="16"><use href="#wv"/></svg></div><div class="btn-group msg"><button class="btn">M</button><button class="btn">S</button></div><div class="tname flex-grow-1">weird instru...t_single st 2</div><span class="tdot"></span></div>
    <div class="trow d-flex align-items-center"><div class="tnum nn">14</div><div class="ticon"><svg width="25" height="16"><use href="#wv"/></svg></div><div class="btn-group msg"><button class="btn">M</button><button class="btn">S</button></div><div class="tname flex-grow-1">weird instru...t_single st 3</div><span class="tdot"></span></div>
    <div class="trow d-flex align-items-center"><div class="tnum nn">15</div><div class="ticon"><svg width="25" height="16"><use href="#wv"/></svg></div><div class="btn-group msg"><button class="btn">M</button><button class="btn">S</button></div><div class="tname flex-grow-1">weird instrument_rasg 1</div><span class="tdot"></span></div>
    <div class="trow d-flex align-items-center"><div class="tnum nn">16</div><div class="ticon"><svg width="25" height="16"><use href="#wv"/></svg></div><div class="btn-group msg"><button class="btn">M</button><button class="btn">S</button></div><div class="tname flex-grow-1">weird instrument_rasg 2</div><span class="tdot"></span></div>
    <div class="trow d-flex align-items-center"><div class="tnum nn">17</div><div class="ticon"><svg width="25" height="16"><use href="#wv"/></svg></div><div class="btn-group msg"><button class="btn">M</button><button class="btn">S</button></div><div class="tname flex-grow-1">weird instrument_rasg 3</div><span class="tdot"></span></div>
    <div class="trow d-flex align-items-center"><div class="tnum nn">18</div><div class="ticon"><svg width="25" height="16"><use href="#wv"/></svg></div><div class="btn-group msg"><button class="btn">M</button><button class="btn">S</button></div><div class="tname flex-grow-1">wispering</div><span class="tdot"></span></div>
    <div class="trow d-flex align-items-center"><div class="tnum nn">19</div><div class="ticon"><svg width="25" height="16"><use href="#wv"/></svg></div><div class="btn-group msg"><button class="btn">M</button><button class="btn">S</button></div><div class="tname flex-grow-1">camara 1</div><span class="tdot"></span></div>
    <div class="trow d-flex align-items-center"><div class="tnum nn">20</div><div class="ticon"><svg width="25" height="16"><use href="#wv"/></svg></div><div class="btn-group msg"><button class="btn">M</button><button class="btn">S</button></div><div class="tname flex-grow-1">camara 2</div><span class="tdot"></span></div>
    <div class="trow d-flex align-items-center"><div class="tnum nn">21</div><div class="ticon"><svg width="25" height="16"><use href="#wv"/></svg></div><div class="btn-group msg"><button class="btn">M</button><button class="btn">S</button></div><div class="tname flex-grow-1">massage</div><span class="tdot"></span></div>
    <div class="trow d-flex align-items-center"><div class="tnum nn">22</div><div class="ticon"><svg width="25" height="16"><use href="#wv"/></svg></div><div class="btn-group msg"><button class="btn">M</button><button class="btn">S</button></div><div class="tname flex-grow-1">audio 1</div><span class="tdot"></span></div>
    <div class="trow d-flex align-items-center"><div class="tnum nn">23</div><div class="ticon"><svg width="25" height="16"><use href="#wv"/></svg></div><div class="btn-group msg"><button class="btn">M</button><button class="btn">S</button></div><div class="tname flex-grow-1">audio 1</div><span class="tdot"></span></div>
    <div class="trow sel24 d-flex align-items-center"><div class="tnum nn">24</div><div class="ticon"><svg width="25" height="16"><use href="#wv"/></svg></div><div class="btn-group msg"><button class="btn">M</button><button class="btn">S</button></div><div class="tname flex-grow-1">audio 1</div><span class="tdot"></span></div>
   </div>
   <div class="timeline flex-grow-1">
    <div class="rule1 d-flex">
     <div class="bcell bfill bfirst">1</div><div class="bcell bfill">2</div><div class="bcell bfill">3</div><div class="bcell bfill cycend">4</div><div class="bcell">5</div><div class="bcell">6</div><div class="bcell">7</div><div class="bcell">8</div><div class="bcell">9</div><div class="bcell">10</div><div class="bcell">11</div><div class="bcell">12</div><div class="bcell">13</div>
    </div>
    <div class="rule2"></div>
    <div class="lanes">
     <div class="lane"><div class="rgn c1" style="width:1471px">Untitled_1#01<svg width="21" height="13"><use href="#rings"/></svg></div></div>
     <div class="lane"><div class="rgn c2" style="width:1522px">Untitled_2#02.3<svg width="21" height="13"><use href="#rings"/></svg></div></div>
     <div class="lane"><div class="rgn c3" style="width:265px">Untitled_3#01.3<svg width="21" height="13"><use href="#rings"/></svg></div></div>
     <div class="lane"><div class="rgn c4" style="width:326px">Untitled_4#02.1<svg width="21" height="13"><use href="#rings"/></svg></div></div>
     <div class="lane"><div class="rgn c5" style="width:572px">Untitled_5#01.1<svg width="21" height="13"><use href="#rings"/></svg></div></div>
     <div class="lane"><div class="rgn c6" style="width:326px">audio 1#01.1<svg width="21" height="13"><use href="#rings"/></svg></div></div>
     <div class="lane"><div class="rgn c7" style="width:244px">audio 1#02.1<svg width="21" height="13"><use href="#rings"/></svg></div></div>
     <div class="lane"><div class="rgn c8" style="width:162px">audio 1#03.1<svg width="21" height="13"><use href="#rings"/></svg></div></div>
     <div class="lane"><div class="rgn c9" style="width:366px">audio 1#05.1<svg width="21" height="13"><use href="#rings"/></svg></div></div>
     <div class="lane"><div class="rgn c10" style="width:244px">audio 1#04.3<svg width="21" height="13"><use href="#rings"/></svg></div></div>
     <div class="lane"><div class="rgn c11" style="width:693px">audio 1#06.1<svg width="21" height="13"><use href="#rings"/></svg></div></div>
     <div class="lane"><div class="rgn c12" style="width:693px">audio 1#07.3<svg width="21" height="13"><use href="#rings"/></svg></div></div>
     <div class="lane"><div class="rgn c13" style="width:857px">audio 1#08.3<svg width="21" height="13"><use href="#rings"/></svg></div></div>
     <div class="lane"><div class="rgn c14" style="width:653px">audio 1#09.3<svg width="21" height="13"><use href="#rings"/></svg></div></div>
     <div class="lane"><div class="rgn c15" style="width:488px">audio 1#10.2<svg width="21" height="13"><use href="#rings"/></svg></div></div>
     <div class="lane"><div class="rgn c16" style="width:816px">audio 1#11.1<svg width="21" height="13"><use href="#rings"/></svg></div></div>
     <div class="lane"><div class="rgn c17" style="width:736px">audio 1#12.1<svg width="21" height="13"><use href="#rings"/></svg></div></div>
     <div class="lane"><div class="rgn c18" style="margin-left:326px;width:1349px">audio 1#15.1<svg width="21" height="13"><use href="#rings"/></svg></div></div>
     <div class="lane"><div class="rgn c19" style="width:326px">audio 1#14.1<svg width="21" height="13"><use href="#rings"/></svg></div></div>
     <div class="lane"><div class="rgn c20" style="width:326px">audio 1#13.1<svg width="21" height="13"><use href="#rings"/></svg></div></div>
     <div class="lane"><div class="rgn c18" style="width:767px">audio 1#16<svg width="21" height="13"><use href="#rings"/></svg></div></div>
     <div class="lane"><div class="rgn c22 dim" style="width:460px">audio 1#18<svg width="21" height="13"><use href="#rings"/></svg></div></div>
     <div class="lane"><div class="rgn c23" style="width:795px">audio 1#19<svg width="21" height="13"><use href="#rings"/></svg></div></div>
     <div class="lane"><div class="rgn c18" style="width:704px">audio 1#21<svg width="21" height="13"><use href="#rings"/></svg></div></div>
    </div>
    <svg class="marker" width="14" height="22" viewBox="0 0 14 22"><path d="M1 0l12 11L1 22z" fill="#6e6e6e"/></svg>
    <div class="pline"></div>
    <svg class="phead" width="19" height="19" viewBox="0 0 19 19"><path d="M2 0h15a2 2 0 0 1 2 2v8l-9.500 9L0 10V2a2 2 0 0 1 2-2z" fill="#b4b4b4"/></svg>
   </div>
  </div>
 </div>
</div>
<script src="https://cdn.jsdelivr.net/npm/bootstrap@5.3.0/dist/js/bootstrap.bundle.min.js"></script>
</body>
</html>
